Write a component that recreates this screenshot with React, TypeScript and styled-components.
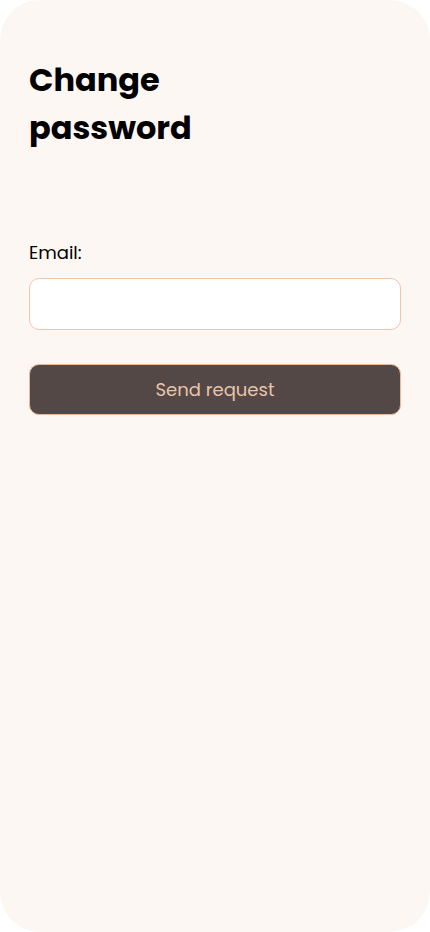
import styled, { createGlobalStyle } from "styled-components";
import { useState } from "react";

const GlobalStyle = createGlobalStyle`
  html, body {
    margin: 0;
    padding: 0;
    background: #ffffff;
  }
  * {
    box-sizing: border-box;
  }
`;

const Screen = styled.div`
  width: 430px;
  height: 932px;
  background: #fdf7f4;
  border-radius: 40px;
  padding: 56px 29px 0 29px;
  font-family: "Poppins", "Open Sans", "Noto Sans", sans-serif;
  color: #000;
`;

const Title = styled.h1`
  margin: 0;
  max-width: 220px;
  font-size: 32px;
  line-height: 48px;
  font-weight: 700;
  letter-spacing: 0;
`;

const Form = styled.form`
  margin-top: 88px;
  display: flex;
  flex-direction: column;
`;

const Label = styled.label`
  font-size: 18px;
  line-height: 26px;
  font-weight: 400;
`;

const Field = styled.input`
  margin-top: 12px;
  height: 52px;
  width: 100%;
  border: 1px solid #f2c6aa;
  border-radius: 10px;
  background: #ffffff;
  padding: 0 14px;
  font-family: inherit;
  font-size: 16px;
  outline: none;
`;

const SubmitButton = styled.button`
  margin-top: 34px;
  height: 51px;
  width: 100%;
  border: 1px solid #e9b99b;
  border-radius: 10px;
  background: #534845;
  color: #e9c4ab;
  font-family: inherit;
  font-size: 18px;
  font-weight: 400;
  cursor: pointer;
`;

export default function App() {
  const [email, setEmail] = useState("");
  return (
    <>
      <GlobalStyle />
      <Screen>
        <Title>Change password</Title>
        <Form onSubmit={(e) => e.preventDefault()}>
          <Label htmlFor="email">Email:</Label>
          <Field
            id="email"
            type="email"
            value={email}
            onChange={(e) => setEmail(e.target.value)}
          />
          <SubmitButton type="submit">Send request</SubmitButton>
        </Form>
      </Screen>
    </>
  );
}
